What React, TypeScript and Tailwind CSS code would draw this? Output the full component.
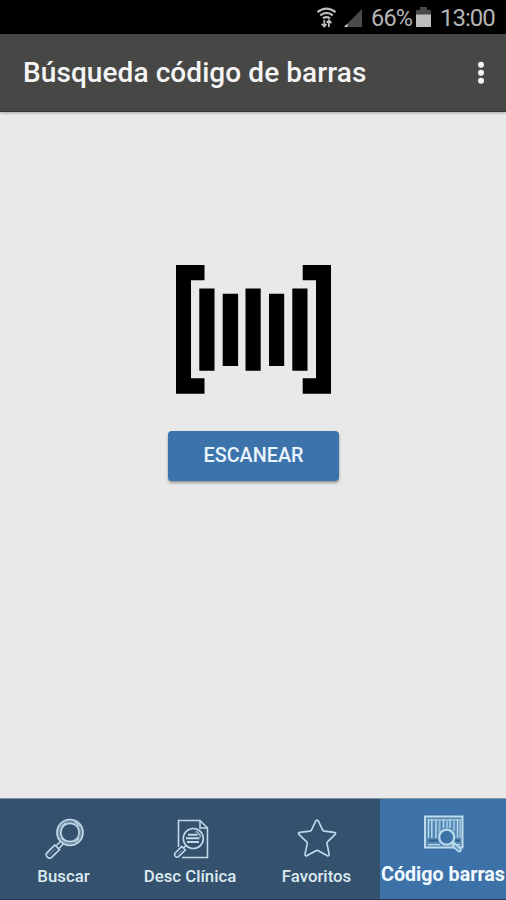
import React from 'react';

function StatusBar() {
  return (
    <div className="flex h-[34px] shrink-0 items-center bg-black pl-[316px] text-[#b4b4b4]">
      <svg className="h-[34px] w-[50px] shrink-0" viewBox="316 0 50 34" fill="none">
        <path d="M317.5 12.2Q326.5 5.2 335.5 12.2M320.2 15.3Q326.5 10.4 332.8 15.3M323 18.3Q326.5 15.8 330 18.3" stroke="#bdbdbd" strokeWidth="2.2" />
        <path d="M324.3 20v6.5M321.7 23.8l2.6 2.7 2.2-2.4M328.9 27v-6.5M326.7 22.8l2.2-2.4 2.6 2.7" stroke="#bdbdbd" strokeWidth="1.8" />
        <path d="M362 9V27H344Z" fill="#4b4b4b" />
        <path d="M347.5 23.5V27H344Z" fill="#d0d0d0" />
      </svg>
      <span className="ml-[5px] w-[41px] whitespace-nowrap pt-[2px] text-[23.5px] leading-[34px] tracking-[-0.8px]">66%</span>
      <svg className="ml-[4px] h-[34px] w-[15px] shrink-0" viewBox="416 0 15 34">
        <path d="M416 10h4V7h7v3h4v5h-15z" fill="#484848" />
        <path d="M416 14.5h15V27h-15z" fill="#bdbdbd" />
      </svg>
      <span className="ml-[9px] whitespace-nowrap pt-[2px] text-[24px] leading-[34px] tracking-[-1px]">13:00</span>
    </div>
  );
}

function Header() {
  return (
    <header className="z-10 flex h-[78px] shrink-0 items-center justify-between border-b border-[#353533] bg-[#474745] pl-[23px] pr-[20px] shadow-[0_1px_3px_rgba(0,0,0,0.3)]">
      <h1 className="whitespace-nowrap text-[28px] font-medium leading-[32px] tracking-[0.08px] text-[#f5f5f5]">Búsqueda código de barras</h1>
      <svg className="h-[24px] w-[10px]" viewBox="0 0 10 24" fill="#f5f5f5">
        <circle cx="5" cy="3.8" r="3" />
        <circle cx="5" cy="11.8" r="3" />
        <circle cx="5" cy="19.8" r="3" />
      </svg>
    </header>
  );
}

function BarcodeGraphic() {
  return (
    <svg className="h-[129px] w-[155px]" viewBox="176 265 155 129">
      <path d="M176 265h28.5v15.3H191v98h13.5v15.4H176zM331 265h-28.3v15.3H316v98h-13.3v15.4H331z" />
      <path d="M199.3 288.5h15.2v82.2h-15.2zM222.7 293.7h15.4v72.4h-15.4zM245.5 288.5h15.2v82.2h-15.2zM269 293.7h15.2v72.4H269zM292.3 288.5h15.2v82.2h-15.2z" />
    </svg>
  );
}

function SearchIcon() {
  return (
    <svg className="h-[42px] w-[42px]" viewBox="43 817 42 42" fill="none" stroke="#c3d8e8" strokeWidth="1.7">
      <circle cx="70" cy="832.5" r="11.2" stroke="#6f8fa8" strokeWidth="2.4" />
      <circle cx="70" cy="832.5" r="13" />
      <circle cx="70" cy="832.5" r="9.2" />
      <path d="M61.5 827.5l4-4.5M75 822l4.5 4.5M61.5 838l4 3.5M75 842l4-4" strokeWidth="1.2" />
      <path d="M60.5 841.5l-4 4M63.3 844l-4 4" />
      <path d="M54.8 845l4.8 4.6-8.2 8q-2 1.3-4-.5-2-2-.6-4z" />
      <path d="M55.3 848.8l-6 6" strokeWidth="1" stroke="#7f9db4" />
    </svg>
  );
}

function DocumentSearchIcon() {
  return (
    <svg className="h-[42px] w-[42px]" viewBox="169 817 42 42" fill="none" stroke="#c3d8e8" strokeWidth="1.6">
      <path d="M178.5 847V820.5h21.5l7.5 7.5v29.5h-25.5" />
      <path d="M200 820.5v7.5h7.5" />
      <circle cx="193.3" cy="838.5" r="10" />
      <path d="M188 834.7h9.5M186 838.3h13.5M187 842h12" strokeWidth="1.9" />
      <path d="M195.5 831.3q4 1.5 5.2 6" strokeWidth="1.8" stroke="#90b1c6" />
      <path d="M186 845.5l-2.5 2.5M181.8 846.5l3.5 3.5-7 6.8q-1.4 1-3-.5-1.4-1.6-.4-3z" />
      <path d="M182 850l-4.5 4.4" stroke="#7f9db4" strokeWidth="1" />
    </svg>
  );
}

function StarIcon() {
  return (
    <svg className="h-[42px] w-[42px]" viewBox="296.5 817 42 42" fill="none" stroke="#bfd9ec" strokeWidth="1.7" strokeLinejoin="round">
      <path d="M316.2 821.2q1.4-2.2 2.7 0l4.2 8.8q.6 1 1.8 1.2l9.7 1.1q2.7.4.8 2.4l-7.4 7.2q-.7.7-.5 1.8l2.1 10.1q.2 2.7-2.1 1.8l-8.7-4.9q-1.2-.6-2.4 0l-8.7 4.9q-2.4.9-2.1-1.8l2.1-10.1q.2-1.1-.5-1.8l-7.5-7.2q-1.8-2 .8-2.4l9.8-1.1q1.1-.2 1.7-1.2z" />
    </svg>
  );
}

function BarcodeSearchIcon() {
  return (
    <svg className="h-[40px] w-[42px]" viewBox="422 814 42 40" fill="none" stroke="#bddaea">
      <rect x="425" y="816.5" width="37.5" height="31" strokeWidth="2" fill="#5288b8" />
      <path d="M428 820h32M428 844.7h12M452 844.7h8" strokeWidth="1.2" />
      <path d="M428.5 819v19M431.8 819v19M436 819v19M443.5 819v9M450 819v9M457.5 819v19" strokeWidth="1.4" />
      <path d="M439.5 819v14M447 819v9M454 819v12M460.2 819v19" strokeWidth="2.2" stroke="#91b9d5" />
      <path d="M429 840.5h9M455 840.5h5" stroke="#315d87" strokeWidth="1.8" />
      <circle cx="446.7" cy="837.2" r="7.5" fill="#3d72a8" strokeWidth="2.2" />
      <path d="M452.2 842.2l2.2 2" strokeWidth="2.4" />
      <path d="M455 843.6l5.6 5q1 1.5-.2 2.6-1.3 1-2.6-.2l-5.2-5z" strokeWidth="1.7" fill="#6d9fc8" />
    </svg>
  );
}

function TabBar() {
  return (
    <nav className="flex h-[102px] shrink-0 border-b border-t border-b-[#243d54] border-t-[#8496a5] bg-[#34526e] text-[16.8px] font-medium text-[#dceaf0]">
      <div className="flex w-[127px] flex-col items-center pt-[18px]">
        <SearchIcon />
        <span className="mt-[5px] whitespace-nowrap leading-[24px]">Buscar</span>
      </div>
      <div className="flex w-[126px] flex-col items-center pt-[18px]">
        <DocumentSearchIcon />
        <span className="mt-[5px] whitespace-nowrap leading-[24px]">Desc Clínica</span>
      </div>
      <div className="flex w-[127px] flex-col items-center pt-[18px]">
        <StarIcon />
        <span className="mt-[5px] whitespace-nowrap leading-[24px]">Favoritos</span>
      </div>
      <div className="flex w-[126px] flex-col items-center bg-[#3d72a8] pt-[15px]">
        <BarcodeSearchIcon />
        <span className="mt-[9px] whitespace-nowrap text-[19.7px] font-bold leading-[24px] text-[#f2faff]">Código barras</span>
      </div>
    </nav>
  );
}

export default function App() {
  return (
    <div className="flex h-[900px] w-[506px] flex-col overflow-hidden bg-[#e9e9e9] font-['Roboto',sans-serif]">
      <StatusBar />
      <Header />
      <main className="flex flex-1 flex-col items-center pt-[153px]">
        <BarcodeGraphic />
        <button className="ml-px mt-[37px] flex h-[50px] w-[171px] items-center justify-center rounded-[4px] bg-[#3d73ab] text-[19.8px] font-medium text-[#e9f4fc] shadow-[0_2px_3px_rgba(0,0,0,0.35)]">
          <span className="pb-[1px]">ESCANEAR</span>
        </button>
      </main>
      <TabBar />
    </div>
  );
}
